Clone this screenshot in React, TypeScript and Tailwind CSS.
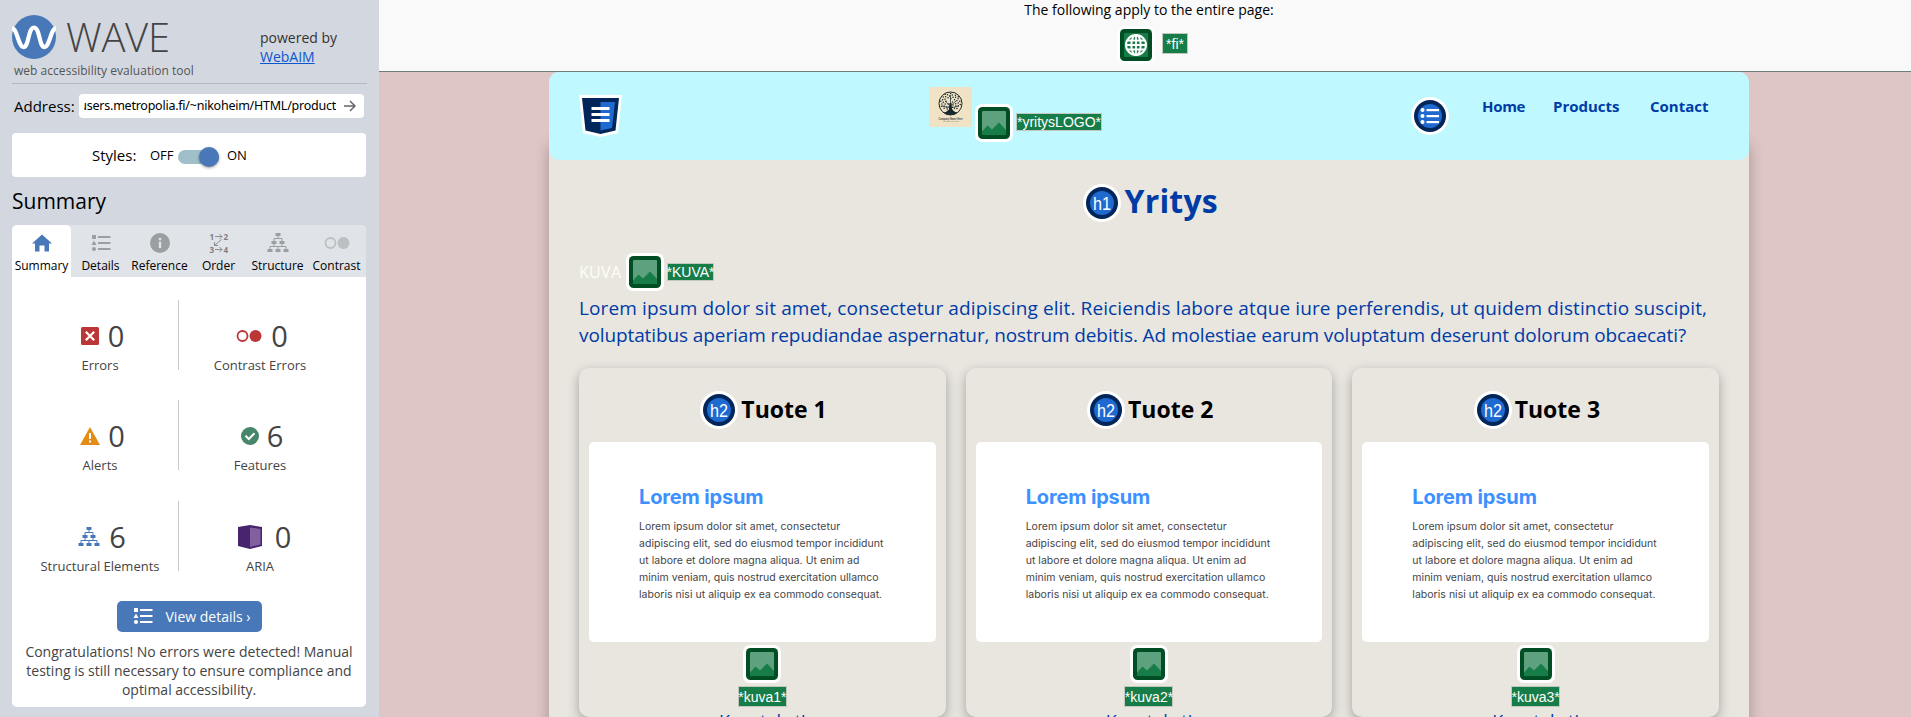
import type { ReactNode } from "react";

const comic = "font-['Comic_Sans_MS','Open_Sans',sans-serif]";

function Squiggle() {
  return (
    <svg width="44" height="44" viewBox="0 0 44 44">
      <circle cx="22" cy="22" r="22" fill="#4878b7" />
      <path
        d="M-1 14 C5 10 6 33 12 32 C17 31 16 13 22 12.500 C28 13 27 31 32 32 C38 33 39 10 45 14"
        fill="none"
        stroke="#fff"
        strokeWidth="4.200"
      />
    </svg>
  );
}

function ListIcon({ color }: { color: string }) {
  return (
    <svg width="20" height="18" viewBox="0 0 20 18" fill={color}>
      <rect x="1" y="1" width="4" height="4" />
      <path d="M3 6.500 L5.500 11 H0.500 Z" />
      <circle cx="3" cy="15" r="2.100" />
      <rect x="7" y="2" width="12.500" height="2" />
      <rect x="7" y="8" width="12.500" height="2" />
      <rect x="7" y="14" width="12.500" height="2" />
    </svg>
  );
}

function TreeIcon({ color }: { color: string }) {
  return (
    <svg width="22" height="20" viewBox="0 0 22 20" fill={color}>
      <rect x="8.500" y="0" width="5" height="3" />
      <rect x="4.500" y="8" width="5" height="3" />
      <rect x="12.500" y="8" width="5" height="3" />
      <rect x="0.500" y="16" width="5" height="3" />
      <rect x="8.500" y="16" width="5" height="3" />
      <rect x="16.500" y="16" width="5" height="3" />
      <path
        d="M11 3V5.500M7 8V5.500H15V8M7 11V13.500M15 11V13.500M3 16V13.500H19V16M11 13.500V16"
        fill="none"
        stroke={color}
      />
    </svg>
  );
}

function ContrastIcon({ color }: { color: string }) {
  return (
    <svg width="26" height="14" viewBox="0 0 26 14">
      <circle cx="6.500" cy="7" r="5" fill="none" stroke={color} strokeWidth="1.800" />
      <circle cx="19.500" cy="7" r="6" fill={color} />
    </svg>
  );
}

function HomeIcon() {
  return (
    <svg width="20" height="18" viewBox="0 0 20 18" fill="#4878b7">
      <path d="M10 0.500 L20 9.500 H17 V17.500 H12.500 V11.500 H7.500 V17.500 H3 V9.500 H0 Z" />
    </svg>
  );
}

function InfoIcon() {
  return (
    <svg width="20" height="20" viewBox="0 0 20 20">
      <circle cx="10" cy="10" r="10" fill="#9c9fa1" />
      <rect x="8.800" y="5" width="2.400" height="2.400" fill="#e0e3e8" />
      <rect x="8.800" y="8.800" width="2.400" height="6.200" fill="#e0e3e8" />
    </svg>
  );
}

function OrderIcon() {
  return (
    <svg
      width="20"
      height="20"
      viewBox="0 0 20 20"
      className="overflow-visible font-['Open_Sans',sans-serif] text-[8px] font-bold"
      fill="#7d8083"
    >
      <text x="0.500" y="6.500">1</text>
      <text x="14.500" y="6.500">2</text>
      <text x="0.500" y="19.500">3</text>
      <text x="14.500" y="19.500">4</text>
      <path
        d="M6 3.500H13M10.500 1L13 3.500L10.500 6M6 16.500H13M10.500 14L13 16.500L10.500 19M12.500 6.500L5.500 12.500M5.500 9V12.500H9"
        fill="none"
        stroke="#8b8e91"
      />
    </svg>
  );
}

function ErrorIcon() {
  return (
    <svg width="18" height="18" viewBox="0 0 18 18">
      <rect width="18" height="18" rx="1.500" fill="#bb3737" />
      <path d="M4.800 4.800L13.200 13.200M13.200 4.800L4.800 13.200" stroke="#fff" strokeWidth="2.200" />
    </svg>
  );
}

function AlertIcon() {
  return (
    <svg width="20" height="18" viewBox="0 0 20 18">
      <path d="M10 0 L20 18 H0 Z" fill="#e38d16" />
      <rect x="9" y="6" width="2" height="6" fill="#fff" />
      <rect x="9" y="13.500" width="2" height="2" fill="#fff" />
    </svg>
  );
}

function FeatureIcon() {
  return (
    <svg width="18" height="18" viewBox="0 0 18 18">
      <circle cx="9" cy="9" r="9" fill="#46866a" />
      <path d="M4.500 8.800L7.800 12L13.500 6.300" fill="none" stroke="#fff" strokeWidth="2" />
    </svg>
  );
}

function AriaIcon() {
  return (
    <svg width="24" height="24" viewBox="0 0 24 24">
      <path d="M0 2 L12 0 L24 2 V21 L12 24 L0 21 Z" fill="#48246f" />
      <path d="M12 2.500 L22.500 4 V19.500 L12 22 Z" fill="#8260a0" />
    </svg>
  );
}

function ImageIcon() {
  return (
    <svg width="38" height="38" viewBox="0 0 38 38" className="block shrink-0">
      <rect width="38" height="38" rx="7" fill="#fff" />
      <rect x="3" y="3" width="32" height="32" rx="4.500" fill="#014e25" />
      <rect x="7" y="7" width="24" height="24" rx="1" fill="#5da17e" />
      <path d="M7 27.500L12.500 21.500L17 25.500L24 18.500L31 26V31H7Z" fill="#177d48" />
    </svg>
  );
}

function GlobeIcon() {
  return (
    <svg width="38" height="38" viewBox="0 0 38 38" className="block shrink-0">
      <rect width="38" height="38" rx="7" fill="#fff" />
      <rect x="3" y="3" width="32" height="32" rx="4.500" fill="#014e25" />
      <rect x="7" y="7" width="24" height="24" rx="1" fill="#177d48" />
      <g fill="none" stroke="#fff" strokeWidth="2">
        <circle cx="19" cy="19" r="10" />
        <ellipse cx="19" cy="19" rx="4.700" ry="10" />
        <path d="M19 9V29M9 19H29M10.500 14.500H27.500M10.500 23.500H27.500" strokeWidth="1.800" />
      </g>
    </svg>
  );
}

function Disc({ children }: { children: ReactNode }) {
  return (
    <svg
      width="38"
      height="38"
      viewBox="0 0 38 38"
      className="block shrink-0 font-['Liberation_Sans',Arial,sans-serif] text-[18px] font-normal"
    >
      <circle cx="19" cy="19" r="19" fill="#fff" />
      <circle cx="19" cy="19" r="16" fill="#022659" />
      <circle cx="19" cy="19" r="12" fill="#1e6ad0" />
      {children}
    </svg>
  );
}

function HeadingIcon({ level }: { level: string }) {
  return (
    <Disc>
      <text x="19" y="26" textAnchor="middle" fill="#fff" textLength="18" lengthAdjust="spacingAndGlyphs">
        {level}
      </text>
    </Disc>
  );
}

function NavListIcon() {
  return (
    <Disc>
      <g fill="#fff">
        <circle cx="11.500" cy="13" r="2" />
        <circle cx="11.500" cy="19" r="2" />
        <circle cx="11.500" cy="25" r="2" />
        <rect x="15.500" y="12" width="12.500" height="2.200" />
        <rect x="15.500" y="18" width="12.500" height="2.200" />
        <rect x="15.500" y="24" width="12.500" height="2.200" />
      </g>
    </Disc>
  );
}

function HeaderRegionIcon() {
  return (
    <svg width="43" height="42" viewBox="0 0 43 42" className="block shrink-0">
      <path d="M0 0H43L39 38L21.500 42L4 38Z" fill="#fff" />
      <path d="M3 3H40L36.500 35.500L21.500 39L6.500 35.500Z" fill="#022659" />
      <path d="M21.500 7H36L33 33L21.500 35.500Z" fill="#1e6ad0" />
      <path d="M12.500 13.500H30.500M12.500 19.500H30.500M12.500 25.500H30.500" stroke="#fff" strokeWidth="3" />
    </svg>
  );
}

function TreeLogo() {
  const leaves = Array.from({ length: 44 }, (_, i) => {
    const angle = i * 2.4;
    const r = 2 + Math.sqrt(i) * 1.25;
    return { x: 21.5 + Math.cos(angle) * r, y: 15 + Math.sin(angle) * r * 0.9 };
  });
  return (
    <svg width="43" height="40" viewBox="0 0 43 40" className="block shrink-0">
      <rect width="43" height="40" fill="#f0e3c5" />
      <circle cx="21.500" cy="16.500" r="11.500" fill="none" stroke="#16282c" strokeWidth="1" />
      {leaves.map((l, i) => (
        <circle key={i} cx={l.x} cy={l.y} r="0.750" fill="#16282c" />
      ))}
      <path
        d="M20.500 16H22.500L23 22.500Q25 25 29 25.500Q25 28 21.500 28Q18 28 14 25.500Q18 25 20 22.500Z"
        fill="#16282c"
      />
      <path d="M21.500 19L16 14M21.500 19L27 14M21.500 17V8M21.500 21L13 19M21.500 21L30 19" stroke="#16282c" strokeWidth="0.700" />
      <text
        x="21.500"
        y="33"
        textAnchor="middle"
        fill="#3b4444"
        textLength="24"
        lengthAdjust="spacingAndGlyphs"
        className="font-['Liberation_Sans',sans-serif] text-[3px] font-bold"
      >
        Company Name Here
      </text>
      <path d="M14 34.500H30" stroke="#b5ab94" strokeWidth="0.600" />
    </svg>
  );
}

function AltLabel({ text, className }: { text: string; className: string }) {
  return (
    <span
      className={`box-border flex shrink-0 items-center justify-center whitespace-nowrap border border-[#c3c8bf] bg-[#177d48] font-['Liberation_Sans',Arial,sans-serif] text-[14px] leading-none text-white ${className}`}
    >
      {text}
    </span>
  );
}

const tabs = [
  { label: "Summary", icon: <HomeIcon /> },
  { label: "Details", icon: <ListIcon color="#9c9fa1" /> },
  { label: "Reference", icon: <InfoIcon /> },
  { label: "Order", icon: <OrderIcon /> },
  { label: "Structure", icon: <TreeIcon color="#9c9fa1" /> },
  { label: "Contrast", icon: <ContrastIcon color="#bdc0c3" /> },
];

const stats = [
  [
    { label: "Errors", count: 0, icon: <ErrorIcon />, gap: "gap-[9px] ml-[5px]" },
    { label: "Contrast Errors", count: 0, icon: <ContrastIcon color="#bb3737" />, gap: "gap-[9px] ml-[4px]" },
  ],
  [
    { label: "Alerts", count: 0, icon: <AlertIcon />, gap: "gap-[8px] ml-[5px]" },
    { label: "Features", count: 6, icon: <FeatureIcon />, gap: "gap-[8px] ml-[4px]" },
  ],
  [
    { label: "Structural Elements", count: 6, icon: <TreeIcon color="#4878b7" />, gap: "gap-[9px] ml-[4px]" },
    { label: "ARIA", count: 0, icon: <AriaIcon />, gap: "gap-[13px] ml-[9px]" },
  ],
];

function Sidebar() {
  return (
    <aside className="h-full w-[379px] shrink-0 bg-[#d3d8e0] px-3 font-['Open_Sans','Noto_Sans',sans-serif] text-black">
      <div className="flex h-[84px] border-b border-[#b5b9bc]">
        <div className="w-[248px] pt-[15px]">
          <div className="flex h-11 items-center">
            <Squiggle />
            <span className="ml-[10px] text-[40px] font-light leading-[44px] tracking-[-0.3px] text-[#444]">WAVE</span>
          </div>
          <p className="ml-[2px] mt-[3px] whitespace-nowrap text-[12px] leading-[18px] tracking-[0.03px] text-[#555]">
            web accessibility evaluation tool
          </p>
        </div>
        <p className="pt-[28px] text-[14px] leading-[19px] text-[#333]">
          powered by
          <br />
          <a className="text-[#0b57d0] underline">WebAIM</a>
        </p>
      </div>

      <div className="mt-[10px] flex h-6 items-center pl-[2px]">
        <span className="w-[65px] text-[15px] leading-6">Address:</span>
        <div className="flex h-6 w-[285px] items-center rounded-[4px] bg-white pl-[5px]">
          <div className="flex w-[252px] justify-end overflow-hidden whitespace-nowrap font-['Noto_Sans',sans-serif] text-[12.5px] leading-6 tracking-[-0.24px]">
            users.metropolia.fi/~nikoheim/HTML/product
          </div>
          <svg width="12" height="12" viewBox="0 0 12 12" className="ml-2" fill="none" stroke="#666" strokeWidth="1.500">
            <path d="M0 6H11M6 1L11 6L6 11" />
          </svg>
        </div>
      </div>

      <div className="mt-[15px] flex h-11 w-[354px] items-center rounded-[4px] bg-white pl-[80px]">
        <span className="w-[58px] text-[15px]">Styles:</span>
        <span className="w-[28px] pt-px text-[13px]">OFF</span>
        <div className="mt-[3px] flex h-[14px] w-[41px] items-center justify-end rounded-full bg-[#9fc0cb]">
          <div className="h-5 w-5 rounded-full bg-[#4878b7] shadow-[0_1px_3px_rgba(0,0,0,0.4)]" />
        </div>
        <span className="ml-2 pt-px text-[13px]">ON</span>
      </div>

      <h2 className="mt-[9px] h-[39px] text-[21px] leading-[30px]">Summary</h2>

      <div className="flex h-[482px] w-[354px] flex-col overflow-hidden rounded-[5px] bg-white">
        <div className="grid h-[52px] shrink-0 grid-cols-6 bg-[#e0e3e8]">
          {tabs.map((t, i) => (
            <div
              key={t.label}
              className={`flex flex-col items-center whitespace-nowrap text-[12px] leading-4 ${i === 0 ? "rounded-t-[5px] bg-white" : ""}`}
            >
              <span className="flex h-[33px] items-center pt-[2px]">{t.icon}</span>
              {t.label}
            </div>
          ))}
        </div>
        {stats.map((row, i) => (
          <div key={i} className={`flex h-[70px] shrink-0 text-[#444] ${i === 0 ? "mt-[23px]" : i === 1 ? "mt-[30px]" : "mt-[31px]"}`}>
            {row.map((s, j) => (
              <div
                key={s.label}
                className={`flex flex-col items-center ${j === 0 ? "w-[167px] border-r border-[#c8c8c8] pl-[10px]" : "w-[162px]"}`}
              >
                <div className={`mt-[18px] flex h-9 items-center self-stretch justify-center ${s.gap}`}>
                  {s.icon}
                  <span className="text-[29px] leading-9">{s.count}</span>
                </div>
                <span className="mt-[3px] text-[13px] leading-4 whitespace-nowrap">{s.label}</span>
              </div>
            ))}
          </div>
        ))}
        <button className="mx-auto mt-[30px] flex h-[31px] w-[145px] shrink-0 items-center rounded-[5px] bg-[#4878b7] pb-px pl-4 text-[14px] text-white">
          <ListIcon color="#fff" />
          <span className="ml-[13px] whitespace-nowrap">View details ›</span>
        </button>
        <p className="mt-[10px] text-center text-[14px] leading-[19px] text-[#444]">
          Congratulations! No errors were detected! Manual
          <br />
          testing is still necessary to ensure compliance and
          <br />
          optimal accessibility.
        </p>
      </div>
    </aside>
  );
}

function ProductCard({ n }: { n: number }) {
  return (
    <article className="flex h-[349px] flex-col rounded-[10px] bg-[#e8e6df] px-[10px] shadow-[0_4px_12px_rgba(0,0,0,0.3)]">
      <h2 className={`mt-[23px] flex h-[38px] shrink-0 justify-center pl-[2px] text-[23px] font-bold leading-[36px] text-black ${comic}`}>
        <HeadingIcon level="h2" />
        <span className="ml-[3px] w-[85px] whitespace-nowrap">Tuote {n}</span>
      </h2>
      <div className="mt-[13px] h-[200px] shrink-0 rounded-[5px] bg-white pl-[50px] pt-[43px] font-[Inter,sans-serif]">
        <h3 className="text-[20px] font-bold leading-6 tracking-[-0.15px] text-[#3d91ff]">Lorem ipsum</h3>
        <p className="mt-[9px] whitespace-nowrap text-[10.5px] leading-[17px] tracking-[0.03px] text-[#444448]">
          Lorem ipsum dolor sit amet, consectetur
          <br />
          adipiscing elit, sed do eiusmod tempor incididunt
          <br />
          ut labore et dolore magna aliqua. Ut enim ad
          <br />
          minim veniam, quis nostrud exercitation ullamco
          <br />
          laboris nisi ut aliquip ex ea commodo consequat.
        </p>
      </div>
      <div className="mt-[3px] flex flex-col items-center">
        <ImageIcon />
        <AltLabel text={`*kuva${n}*`} className="mt-[3px] h-[21px] w-[49px]" />
        <div className={`mt-[3px] h-[7px] overflow-hidden text-[18px] leading-[22px] text-[#003ba6] ${comic}`}>Kuvateksti</div>
      </div>
    </article>
  );
}

export default function App() {
  return (
    <div className="flex h-[717px] w-[1911px] overflow-hidden">
      <Sidebar />
      <div className="flex min-w-0 flex-1 flex-col bg-[#dfc6c6]">
        <div className="flex h-[72px] shrink-0 flex-col items-center border-b border-[#6c7f72] bg-[#f9f9f9] pl-2 font-['Open_Sans','Noto_Sans',sans-serif] text-[14px] text-black">
          <p className="h-[26px] whitespace-nowrap leading-[19px]">The following apply to the entire page:</p>
          <div className="flex items-start pl-[7px]">
            <GlobeIcon />
            <AltLabel text="*fi*" className="ml-[7px] mt-[7px] h-[21px] w-[26px]" />
          </div>
        </div>

        <div className="ml-[170px] flex h-[645px] w-[1200px] flex-col rounded-t-[10px] bg-[#e8e6df] shadow-[0_70px_15px_-1px_rgba(0,0,0,0.3)]">
          <header className="flex h-[88px] shrink-0 items-start rounded-[10px] bg-[#bff8ff] pl-[30px]">
            <div className="mt-[23px]">
              <HeaderRegionIcon />
            </div>
            <div className="ml-[307px] mt-[15px]">
              <TreeLogo />
            </div>
            <div className="ml-[3px] mt-[32px]">
              <ImageIcon />
            </div>
            <AltLabel text="*yritysLOGO*" className="ml-[3px] mt-[41px] h-[18px] w-[86px]" />
            <div className="ml-[309px] mt-[25px]">
              <NavListIcon />
            </div>
            <nav className={`ml-[33px] mt-[22px] flex whitespace-nowrap text-[15px] font-bold leading-6 text-[#003ba6] ${comic}`}>
              <a className="w-[71px] tracking-[-0.3px]">Home</a>
              <a className="w-[97px]">Products</a>
              <a className="w-[60px]">Contact</a>
            </nav>
          </header>

          <h1 className={`mt-[24px] flex h-[38px] shrink-0 justify-center pl-[4px] text-[32px] font-bold leading-[34px] text-[#003ba6] ${comic}`}>
            <HeadingIcon level="h1" />
            <span className="ml-[4px] w-[95px] tracking-[0.2px]">Yritys</span>
          </h1>

          <div className="mt-[31px] flex h-[38px] shrink-0 items-center pl-[30px]">
            <span className={`w-[47px] text-[16px] font-medium tracking-[0.3px] text-[#fffff0] ${comic}`}>KUVA</span>
            <ImageIcon />
            <AltLabel text="*KUVA*" className="ml-[3px] h-[18px] w-[47px]" />
          </div>

          <p className={`mt-[4px] flex h-[54px] flex-col whitespace-nowrap pl-[30px] text-[19px] leading-[27px] text-[#003ba6] ${comic}`}>
            <span className="tracking-[0.12px]">
              Lorem ipsum dolor sit amet, consectetur adipiscing elit. Reiciendis labore atque iure perferendis, ut quidem distinctio suscipit,
            </span>
            <span className="tracking-[-0.1px]">
              voluptatibus aperiam repudiandae aspernatur, nostrum debitis. Ad molestiae earum voluptatum deserunt dolorum obcaecati?
            </span>
          </p>

          <div className="mt-[19px] grid grid-cols-3 gap-5 px-[30px]">
            <ProductCard n={1} />
            <ProductCard n={2} />
            <ProductCard n={3} />
          </div>
        </div>
      </div>
    </div>
  );
}
